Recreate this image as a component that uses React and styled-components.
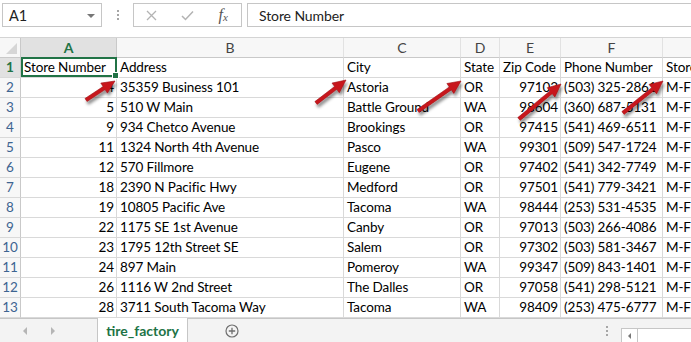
import React from 'react';
import styled, { createGlobalStyle } from 'styled-components';

const GlobalStyle = createGlobalStyle`
  html, body { margin: 0; padding: 0; background: #fff; overflow: hidden; }
  #root { width: 691px; height: 342px; }
`;

const FONT = `"Lato", "Open Sans", "Liberation Sans", sans-serif`;
const GREEN = '#217346';
const GRID = '#d9d9d9';

const Window = styled.div`
  position: relative;
  width: 691px;
  height: 342px;
  overflow: hidden;
  display: flex;
  flex-direction: column;
  font-family: ${FONT};
  background: #fff;
`;

const FormulaBar = styled.div`
  display: flex;
  align-items: flex-start;
  height: 38px;
  box-sizing: border-box;
  padding: 3px 0 0 2px;
  border-bottom: 1px solid #d4d4d4;
  flex-shrink: 0;
`;

const NameBox = styled.div`
  width: 100px;
  height: 24px;
  box-sizing: border-box;
  border: 1px solid #c6c6c6;
  display: flex;
  align-items: center;
  justify-content: space-between;
  padding: 0 6px 0 6px;
  font-size: 14.5px;
  color: #222;
`;

const Caret = styled.span`
  width: 0;
  height: 0;
  border-left: 4px solid transparent;
  border-right: 4px solid transparent;
  border-top: 4px solid #777;
  margin-top: 1px;
`;

const VDots = styled.div`
  width: ${(p) => p.$w || 31}px;
  height: 24px;
  align-self: ${(p) => p.$center ? 'center' : 'auto'};
  display: flex;
  flex-direction: column;
  align-items: center;
  justify-content: center;
  gap: 2px;
  span {
    width: 2px;
    height: 2px;
    background: #a6a6a6;
  }
`;

const ButtonBox = styled.div`
  width: 109px;
  height: 24px;
  box-sizing: border-box;
  border: 1px solid #c6c6c6;
  display: flex;
  align-items: center;
`;

const BarButton = styled.div`
  width: 36px;
  display: flex;
  justify-content: center;
  align-items: center;
`;

const Fx = styled.span`
  font-family: "Liberation Serif", serif;
  font-style: italic;
  font-size: 16px;
  color: #555;
  sub {
    font-size: 11px;
    vertical-align: -1px;
  }
`;

const FormulaInput = styled.div`
  flex: 1;
  margin-left: 5px;
  height: 24px;
  box-sizing: border-box;
  border: 1px solid #c6c6c6;
  border-right: none;
  display: flex;
  align-items: center;
  padding-left: 11px;
  font-size: 14px;
  letter-spacing: -0.1px;
  color: #222;
`;

const COLS = [21, 96, 227, 117, 39, 61, 102, 120];

const Sheet = styled.div`
  display: grid;
  grid-template-columns: ${COLS.map((c) => c + 'px').join(' ')};
  grid-auto-rows: 20px;
  flex-shrink: 0;
`;

const Corner = styled.div`
  position: relative;
  background: #f7f7f7;
  border-right: 1px solid #c9c9c9;
  border-bottom: 1px solid #c9c9c9;
  box-sizing: border-box;
  &::after {
    content: '';
    position: absolute;
    right: 3px;
    bottom: 3px;
    width: 0;
    height: 0;
    border-left: 11px solid transparent;
    border-bottom: 11px solid #d6d6d6;
  }
`;

const ColHead = styled.div`
  box-sizing: border-box;
  background: ${(p) => (p.$active ? '#e1e1e1' : '#f7f7f7')};
  border-right: 1px solid ${(p) => (p.$active ? '#c9c9c9' : '#e2e2e2')};
  border-bottom: 1px solid #c9c9c9;
  text-align: center;
  font-size: 14px;
  line-height: 19px;
  color: ${(p) => (p.$active ? GREEN : '#444')};
  font-weight: ${(p) => (p.$active ? 700 : 400)};
  white-space: nowrap;
  overflow: hidden;
`;

const RowHead = styled.div`
  box-sizing: border-box;
  background: ${(p) => (p.$active ? '#e1e1e1' : '#f7f7f7')};
  border-right: 1px solid #c9c9c9;
  border-bottom: 1px solid ${GRID};
  text-align: center;
  font-size: 13.5px;
  line-height: 19px;
  color: ${(p) => (p.$active ? GREEN : '#3d6491')};
  font-weight: ${(p) => (p.$active ? 700 : 400)};
`;

const Cell = styled.div`
  position: relative;
  box-sizing: border-box;
  border-right: 1px solid ${GRID};
  border-bottom: 1px solid ${GRID};
  padding: 0 2px 0 3px;
  font-size: 13.5px;
  letter-spacing: -0.1px;
  line-height: 19px;
  color: #000;
  text-align: ${(p) => (p.$num ? 'right' : 'left')};
  white-space: nowrap;
  overflow: ${(p) => (p.$selected ? 'visible' : 'hidden')};
  z-index: ${(p) => (p.$selected ? 2 : 1)};
`;

const Selection = styled.div`
  position: absolute;
  top: -1px;
  left: 0;
  right: -1px;
  bottom: 0;
  border: 2px solid ${GREEN};
  pointer-events: none;
`;

const Handle = styled.div`
  position: absolute;
  right: -4px;
  bottom: -4px;
  width: 5px;
  height: 5px;
  background: ${GREEN};
  border: 1px solid #fff;
`;

const TabBar = styled.div`
  flex: 1;
  display: flex;
  align-items: stretch;
  background: #f3f3f3;
  border-top: 1px solid #c6c6c6;
  box-sizing: border-box;
`;

const NavArea = styled.div`
  width: 97px;
  display: flex;
  align-items: center;
  padding-left: 23px;
  box-sizing: border-box;
  gap: 24px;
`;

const NavTri = styled.span`
  width: 0;
  height: 0;
  border-top: 4px solid transparent;
  border-bottom: 4px solid transparent;
  ${(p) =>
    p.$dir === 'left'
      ? 'border-right: 4px solid #b5b5b5;'
      : 'border-left: 4px solid #b5b5b5;'}
`;

const Tab = styled.div`
  width: 91px;
  margin-top: -1px;
  background: #fff;
  border-left: 1px solid #c6c6c6;
  border-right: 1px solid #c6c6c6;
  box-sizing: border-box;
  display: flex;
  align-items: center;
  justify-content: center;
  color: ${GREEN};
  font-weight: 700;
  font-size: 14px;
  padding-bottom: 1px;
`;

const AddSheet = styled.div`
  margin-left: 37px;
  align-self: center;
  width: 14px;
  height: 14px;
  display: flex;
`;

const Spacer = styled.div`
  flex: 1;
`;

const HScroll = styled.div`
  align-self: flex-end;
  width: 70px;
  height: 15px;
  margin-left: 10px;
  box-sizing: border-box;
  border: 1px solid #c6c6c6;
  border-right: none;
  border-bottom: none;
  background: #fff;
  display: flex;
`;

const ScrollBtn = styled.div`
  width: 15px;
  border-right: 1px solid #c6c6c6;
  display: flex;
  align-items: center;
  justify-content: center;
`;

const ScrollTri = styled.span`
  width: 0;
  height: 0;
  border-top: 3px solid transparent;
  border-bottom: 3px solid transparent;
  border-right: 3px solid #777;
`;

const Overlay = styled.svg`
  position: absolute;
  left: 0;
  top: 0;
  pointer-events: none;
  z-index: 10;
`;

const header = ['Store Number', 'Address', 'City', 'State', 'Zip Code', 'Phone Number', 'Store Hours'];

const rows = [
  [4, '35359 Business 101', 'Astoria', 'OR', 97103, '(503) 325-2861'],
  [5, '510 W Main', 'Battle Ground', 'WA', 98604, '(360) 687-5131'],
  [9, '934 Chetco Avenue', 'Brookings', 'OR', 97415, '(541) 469-6511'],
  [11, '1324 North 4th Avenue', 'Pasco', 'WA', 99301, '(509) 547-1724'],
  [12, '570 Fillmore', 'Eugene', 'OR', 97402, '(541) 342-7749'],
  [18, '2390 N Pacific Hwy', 'Medford', 'OR', 97501, '(541) 779-3421'],
  [19, '10805 Pacific Ave', 'Tacoma', 'WA', 98444, '(253) 531-4535'],
  [22, '1175 SE 1st Avenue', 'Canby', 'OR', 97013, '(503) 266-4086'],
  [23, '1795 12th Street SE', 'Salem', 'OR', 97302, '(503) 581-3467'],
  [24, '897 Main', 'Pomeroy', 'WA', 99347, '(509) 843-1401'],
  [26, '1116 W 2nd Street', 'The Dalles', 'OR', 97058, '(541) 298-5121'],
  [28, '3711 South Tacoma Way', 'Tacoma', 'WA', 98409, '(253) 475-6777'],
];

const arrows = [
  [86, 100, 115, 81],
  [316, 103, 346, 80],
  [418, 111, 461, 81],
  [519, 119, 561, 84],
  [623, 113, 663, 81],
];

function Arrow({ x1, y1, x2, y2 }) {
  const dx = x2 - x1;
  const dy = y2 - y1;
  const len = Math.hypot(dx, dy);
  const ux = dx / len;
  const uy = dy / len;
  const px = -uy;
  const py = ux;
  const headL = 13;
  const headW = 6;
  const shaftW = 1.8;
  const bx = x2 - ux * headL;
  const by = y2 - uy * headL;
  const pts = [
    [x1 + px * shaftW, y1 + py * shaftW],
    [bx + px * shaftW, by + py * shaftW],
    [bx + px * headW, by + py * headW],
    [x2, y2],
    [bx - px * headW, by - py * headW],
    [bx - px * shaftW, by - py * shaftW],
    [x1 - px * shaftW, y1 - py * shaftW],
  ]
    .map((p) => p.map((v) => v.toFixed(1)).join(','))
    .join(' ');
  return <polygon points={pts} fill="#c8161d" stroke="#9e0f13" strokeWidth="0.6" strokeLinejoin="round" filter="url(#shadow)" />;
}

export default function App() {
  const colLetters = ['A', 'B', 'C', 'D', 'E', 'F', 'G'];
  return (
    <Window>
      <GlobalStyle />
      <FormulaBar>
        <NameBox>
          A1
          <Caret />
        </NameBox>
        <VDots>
          <span />
          <span />
          <span />
        </VDots>
        <ButtonBox>
          <BarButton>
            <svg width="11" height="11" viewBox="0 0 11 11">
              <path d="M1 1 L10 10 M10 1 L1 10" stroke="#b3b3b3" strokeWidth="1.3" />
            </svg>
          </BarButton>
          <BarButton>
            <svg width="13" height="11" viewBox="0 0 13 11">
              <path d="M1 6 L4.5 9.5 L12 1.5" stroke="#b3b3b3" strokeWidth="1.5" fill="none" />
            </svg>
          </BarButton>
          <BarButton>
            <Fx>
              f<sub>x</sub>
            </Fx>
          </BarButton>
        </ButtonBox>
        <FormulaInput>Store Number</FormulaInput>
      </FormulaBar>

      <Sheet>
        <Corner />
        {colLetters.map((c, i) => (
          <ColHead key={c} $active={i === 0}>
            {c}
          </ColHead>
        ))}
        <RowHead $active>1</RowHead>
        {header.map((h, i) => (
          <Cell key={h} $selected={i === 0}>
            {h}
            {i === 0 && (
              <Selection>
                <Handle />
              </Selection>
            )}
          </Cell>
        ))}
        {rows.map((r, ri) => (
          <React.Fragment key={ri}>
            <RowHead>{ri + 2}</RowHead>
            <Cell $num>{r[0]}</Cell>
            <Cell>{r[1]}</Cell>
            <Cell>{r[2]}</Cell>
            <Cell>{r[3]}</Cell>
            <Cell $num>{r[4]}</Cell>
            <Cell>{r[5]}</Cell>
            <Cell>M-F: 8:00 - 6:00</Cell>
          </React.Fragment>
        ))}
      </Sheet>

      <TabBar>
        <NavArea>
          <NavTri $dir="left" />
          <NavTri $dir="right" />
        </NavArea>
        <Tab>tire_factory</Tab>
        <AddSheet>
          <svg width="14" height="14" viewBox="0 0 14 14">
            <circle cx="7" cy="7" r="6" fill="none" stroke="#6f6f6f" strokeWidth="1.2" />
            <path d="M7 3.8 V10.2 M3.8 7 H10.2" stroke="#6f6f6f" strokeWidth="1.3" />
          </svg>
        </AddSheet>
        <Spacer />
        <VDots $w={8} $center>
          <span />
          <span />
          <span />
        </VDots>
        <HScroll>
          <ScrollBtn>
            <ScrollTri />
          </ScrollBtn>
        </HScroll>
      </TabBar>

      <Overlay width="691" height="342" viewBox="0 0 691 342">
        <defs>
          <filter id="shadow" x="-30%" y="-30%" width="160%" height="160%">
            <feDropShadow dx="1.5" dy="3" stdDeviation="1.6" floodColor="#000" floodOpacity="0.45" />
          </filter>
        </defs>
        {arrows.map((a, i) => (
          <Arrow key={i} x1={a[0]} y1={a[1]} x2={a[2]} y2={a[3]} />
        ))}
      </Overlay>
    </Window>
  );
}
